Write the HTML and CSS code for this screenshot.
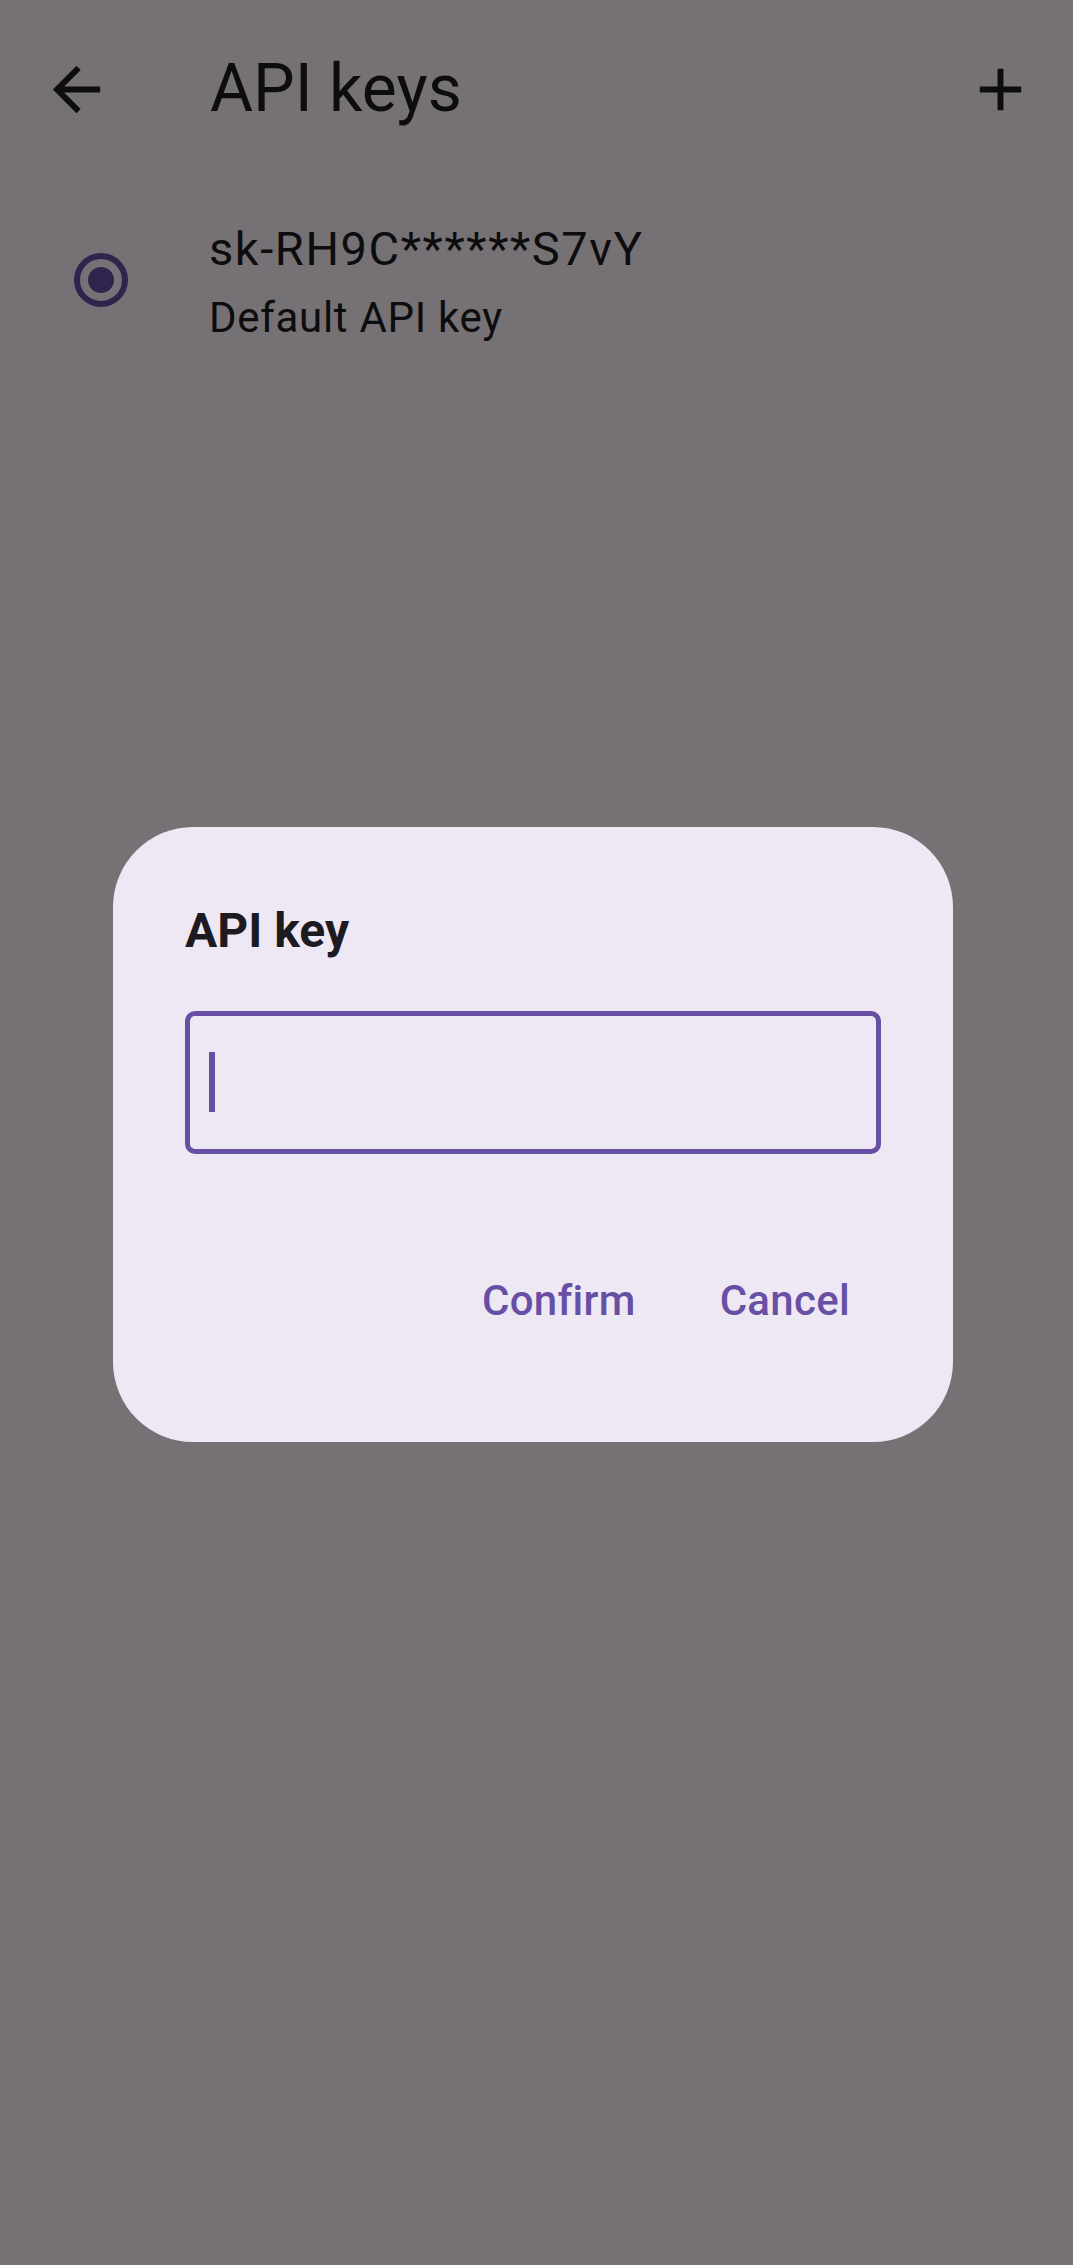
FILE: index.html
```html
<!DOCTYPE html>
<html lang="en">
<head>
    <meta charset="UTF-8">
    <meta name="viewport" content="width=device-width, initial-scale=1.0">
    <title>API keys</title>
    <link rel="stylesheet" href="styles.css">
</head>
<body>
    <header class="app-bar">
        <button class="icon-button back" aria-label="Back">
            <svg viewBox="0 0 24 24" width="71" height="71">
                <path d="M20 11H7.83l5.59-5.59L12 4l-8 8 8 8 1.41-1.41L7.83 13H20v-2z" fill="currentColor"/>
            </svg>
        </button>
        <h1 class="app-title">API keys</h1>
        <button class="icon-button add" aria-label="Add API key">
            <svg viewBox="0 0 24 24" width="71" height="71">
                <path d="M19 13h-6v6h-2v-6H5v-2h6V5h2v6h6v2z" fill="currentColor"/>
            </svg>
        </button>
    </header>

    <ul class="key-list">
        <li class="key-item">
            <span class="radio checked"><span class="radio-dot"></span></span>
            <div class="key-text">
                <div class="key-name">sk-RH9C******S7vY</div>
                <div class="key-label">Default API key</div>
            </div>
        </li>
    </ul>

    <!-- modal dialog over a scrim -->
    <div class="scrim">
        <div class="dialog">
            <h2 class="dialog-title">API key</h2>
            <div class="text-field">
                <span class="cursor"></span>
            </div>
            <div class="dialog-actions">
                <button class="text-button">Confirm</button>
                <button class="text-button">Cancel</button>
            </div>
        </div>
    </div>
</body>
</html>
```

FILE: styles.css
```css
html, body {
    height: 100%;
}

body {
    margin: 0;
    font-family: Roboto, 'Noto Sans', sans-serif;
    background: #fef7ff;
    color: #1d1b20;
}

.app-bar {
    display: flex;
    align-items: center;
    height: 178px;
    padding: 0 37px 0 41px;
}

.icon-button {
    width: 71px;
    height: 71px;
    padding: 0;
    border: none;
    background: none;
    color: #1d1b20;
    display: flex;
}

.app-title {
    flex: 1;
    margin: 0 0 0 98px;
    font-size: 66px;
    font-weight: 400;
    line-height: 78px;
}

.key-list {
    list-style: none;
    margin: 0;
    padding: 0;
}

.key-item {
    display: flex;
    align-items: center;
    gap: 81px;
    padding: 35px 0 36px 74px;
}

.radio {
    box-sizing: border-box;
    width: 54px;
    height: 54px;
    border: 6px solid #6750a4;
    border-radius: 50%;
    display: flex;
    align-items: center;
    justify-content: center;
}

.radio-dot {
    width: 26px;
    height: 26px;
    border-radius: 50%;
    background: #6750a4;
}

.key-name {
    font-size: 47px;
    line-height: 71px;
    letter-spacing: 1.6px;
}

.key-label {
    font-size: 42px;
    line-height: 59px;
    letter-spacing: 0.7px;
    padding-top: 4px;
}

.scrim {
    position: fixed;
    inset: 0;
    background: rgba(0, 0, 0, 0.54);
    display: flex;
    align-items: center;
    justify-content: center;
}

.dialog {
    box-sizing: border-box;
    width: 840px;
    height: 615px;
    margin: 3px 7px 0 0;
    padding: 75px 72px 82px;
    background: #eee8f4;
    border-radius: 80px;
    display: flex;
    flex-direction: column;
}

.dialog-title {
    margin: 0;
    font-size: 48px;
    font-weight: 700;
    line-height: 58px;
    color: #1d1b20;
}

.text-field {
    box-sizing: border-box;
    height: 143px;
    margin-top: 51px;
    border: 5px solid #6750a4;
    border-radius: 10px;
    display: flex;
    align-items: center;
    padding-left: 19px;
}

.cursor {
    width: 6px;
    height: 60px;
    background: #6750a4;
}

.dialog-actions {
    display: flex;
    justify-content: flex-end;
    gap: 12px;
    margin-top: auto;
    margin-right: -5px;
}

.text-button {
    height: 118px;
    padding: 0 36px;
    border: none;
    background: none;
    font-family: inherit;
    font-size: 42px;
    font-weight: 500;
    letter-spacing: 0.3px;
    color: #6750a4;
}
```
